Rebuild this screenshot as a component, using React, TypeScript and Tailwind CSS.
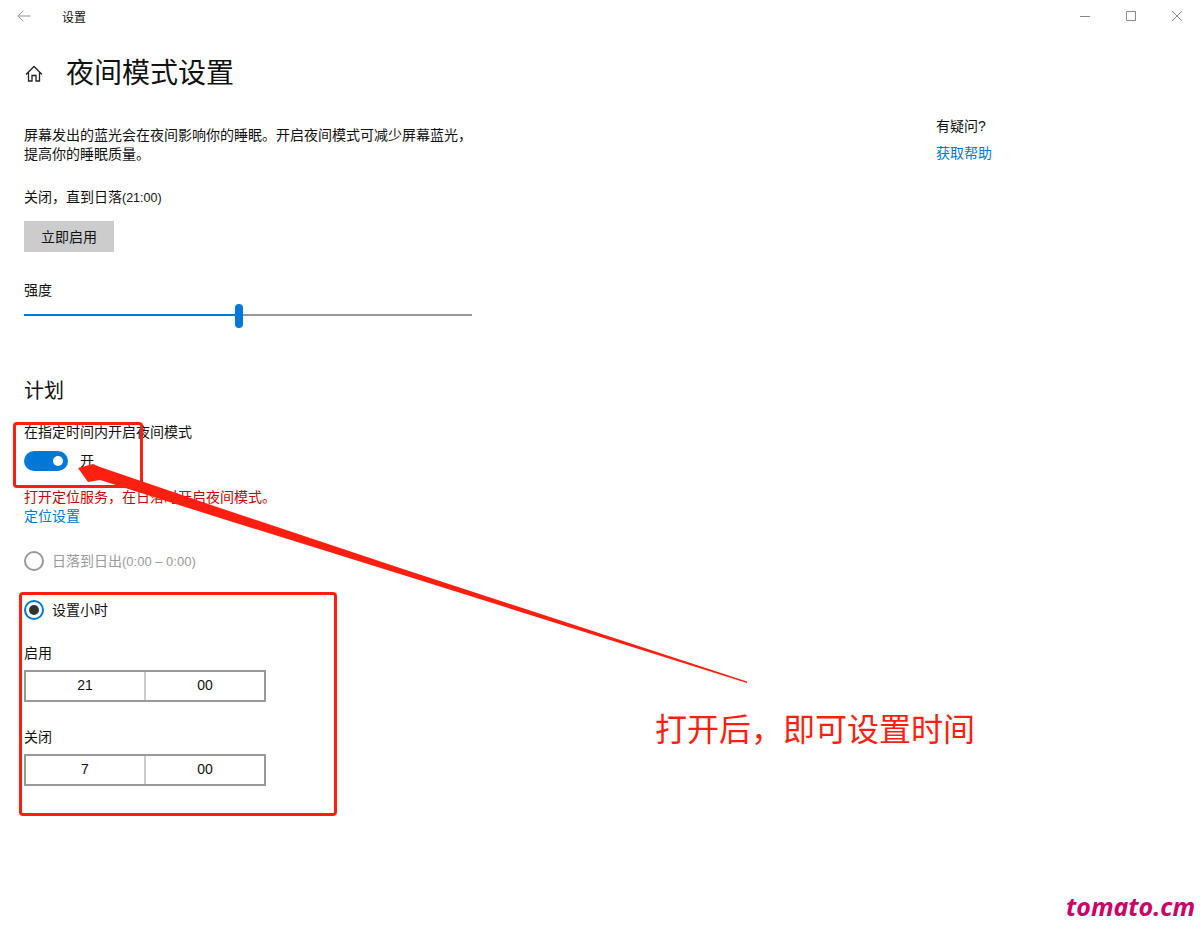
import React from 'react';

const cjk = "font-['Segoe_UI','Liberation_Sans','Noto_Sans_CJK_SC',sans-serif]";

const TimeBox = ({ hour, minute }: { hour: string; minute: string }) => (
  <div className="flex h-8 w-[242px] border-2 border-[#999999] text-sm leading-[26px] text-[#111111]">
    <div className="w-[120px] border-r-2 border-[#cccccc] text-center">{hour}</div>
    <div className="flex-1 text-center">{minute}</div>
  </div>
);

const App: React.FC = () => {
  return (
    <div className={`relative h-[931px] w-[1200px] overflow-hidden bg-white text-[#111111] ${cjk}`}>
      {/* title bar */}
      <div className="flex h-8 items-center">
        <svg className="ml-[17px] h-[14px] w-[14px] text-[#999999]" viewBox="0 0 14 14" fill="none" stroke="currentColor" strokeWidth="1">
          <path d="M13.500 7H1M6.500 1.500 1 7l5.500 5.500" />
        </svg>
        <span className="ml-[31px] mt-[3px] text-xs">设置</span>
        <div className="ml-auto flex items-center text-[#888888]">
          <svg className="h-[10px] w-[10px]" viewBox="0 0 10 10" fill="none" stroke="currentColor"><path d="M0 5.500h10" /></svg>
          <svg className="ml-[36px] h-[10px] w-[10px]" viewBox="0 0 10 10" fill="none" stroke="currentColor"><path d="M.5.500h9v9h-9z" /></svg>
          <svg className="ml-[36px] mr-[18px] h-[10px] w-[10px]" viewBox="0 0 10 10" fill="none" stroke="currentColor"><path d="m0 0 10 10M10 0 0 10" /></svg>
        </div>
      </div>

      <div className="flex justify-between pl-6 pr-[208px]">
        <div className="w-[448px]">
          <div className="mt-5 flex h-11 items-center pl-px">
            <svg className="h-[18px] w-[18px] text-[#222222]" viewBox="0 0 18 18" fill="none" stroke="currentColor" strokeWidth="1.300">
              <path d="M1 9.500 9 1.500l8 8M3.500 7.500v8.500h3.500v-5.500h4V16h3.500V7.500" />
            </svg>
            <h1 className="ml-[23px] text-[28px] font-normal">夜间模式设置</h1>
          </div>

          <p className="mt-[30px] text-sm leading-[19px]">
            屏幕发出的蓝光会在夜间影响你的睡眠。开启夜间模式可减少屏幕蓝光，
            <br />
            提高你的睡眠质量。
          </p>
          <p className="mt-6 h-[19px] text-sm leading-[19px]">
            关闭，直到日落<span className="text-[12.500px]">(21:00)</span>
          </p>
          <button className="mt-[14px] block h-[31px] w-[90px] bg-[#cccccc] text-sm">立即启用</button>

          <p className="mt-[29px] text-sm leading-[19px]">强度</p>
          <div className="relative mt-1 h-6">
            <div className="absolute top-[10px] left-0 h-0.5 w-[212px] bg-[#0078d7]" />
            <div className="absolute top-[10px] left-[212px] h-0.5 w-[236px] bg-[#999999]" />
            <div className="absolute top-0 left-[211px] h-6 w-2 rounded-full bg-[#0078d7]" />
          </div>

          <h2 className="mt-[49px] text-xl font-normal leading-7">计划</h2>
          <p className="mt-[18px] text-sm leading-[19px]">在指定时间内开启夜间模式</p>
          <div className="mt-[9px] flex h-5 items-center">
            <div className="flex h-5 w-11 items-center justify-end rounded-full bg-[#0078d7] pr-[5px]">
              <div className="h-[10px] w-[10px] rounded-full bg-white" />
            </div>
            <span className="ml-3 text-sm">开</span>
          </div>
          <p className="mt-[17px] text-sm leading-[19px] text-[#c50500]">打开定位服务，在日落时开启夜间模式。</p>
          <p className="text-sm leading-[19px] text-[#0078d7]">定位设置</p>

          <div className="mt-[25px] flex h-5 items-center">
            <div className="h-5 w-5 rounded-full border-2 border-[#999999]" />
            <span className="ml-2 text-sm text-[#999999]">
              日落到日出<span className="text-[13px]">(0:00 – 0:00)</span>
            </span>
          </div>
          <div className="mt-[29px] flex h-5 items-center">
            <div className="flex h-5 w-5 items-center justify-center rounded-full border-2 border-[#0078d7]">
              <div className="h-[10px] w-[10px] rounded-full bg-[#333333]" />
            </div>
            <span className="ml-2 text-sm">设置小时</span>
          </div>

          <p className="mt-6 text-sm leading-[19px]">启用</p>
          <div className="mt-[7px]">
            <TimeBox hour="21" minute="00" />
          </div>
          <p className="mt-[26px] text-sm leading-[19px]">关闭</p>
          <div className="mt-[7px]">
            <TimeBox hour="7" minute="00" />
          </div>
        </div>

        <div className="mt-[85px] w-14">
          <p className="text-sm leading-[19px] whitespace-nowrap">有疑问?</p>
          <p className="mt-[8px] text-sm leading-[19px] whitespace-nowrap text-[#0078d7]">获取帮助</p>
        </div>
      </div>

      {/* annotations drawn over the screenshot */}
      <div className="absolute top-[422px] left-[13px] h-[66px] w-[130px] rounded-sm border-[3px] border-[#fe1f10]" />
      <div className="absolute top-[592px] left-[19px] h-[224px] w-[318px] rounded-sm border-[3px] border-[#fe1f10]" />
      <svg className="absolute top-0 left-0 h-[931px] w-[1200px]" viewBox="0 0 1200 931" fill="#fe1f10">
        <path d="M78 468 93 464 100 467 220 508 400 568 747 681.500V683L400 574 220 518 100 480 88 482Z" />
      </svg>
      <div className="absolute top-[708px] left-[655px] text-[32px] leading-[44px] text-[#fe1f10]">打开后，即可设置时间</div>
      <div className="absolute top-[888px] left-[1066px] font-['Noto_Sans',sans-serif] text-[25px] font-bold italic leading-9 text-[#cc0066]">tomato.cm</div>
    </div>
  );
};

export default App;
